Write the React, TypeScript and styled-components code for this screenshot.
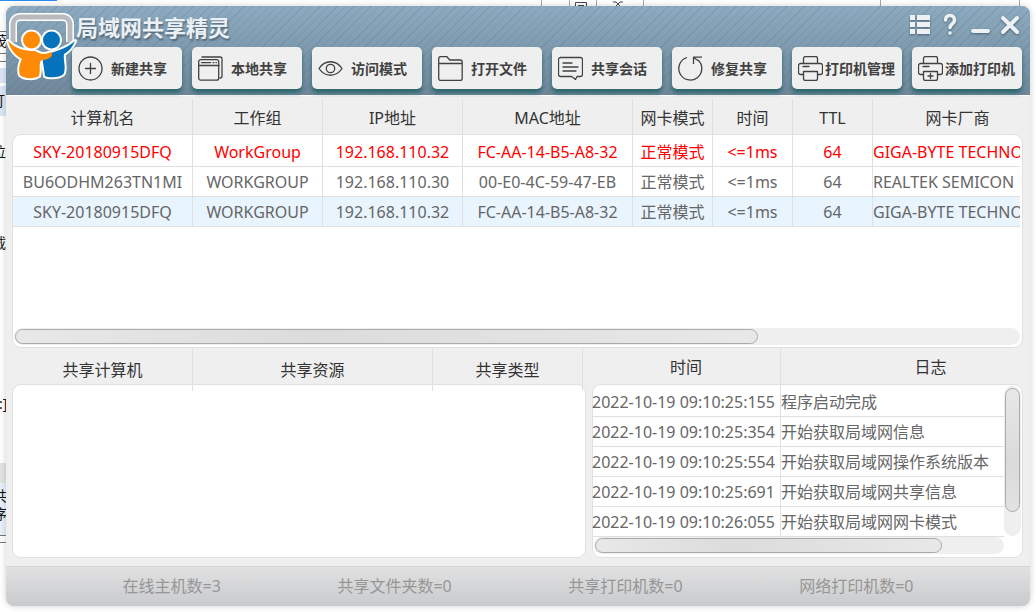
import React from 'react';
import styled, { createGlobalStyle, css } from 'styled-components';

const Global = createGlobalStyle`
  * { box-sizing: border-box; }
  body {
    margin: 0;
    background: #fff;
    font-family: 'Noto Sans', 'Noto Sans CJK SC', sans-serif;
    font-size: 16px;
    font-weight: 400;
    line-height: 24px;
    color: #333;
  }
`;

const line = '#e0e0e0';

const Desktop = styled.div`
  position: relative;
  display: flex;
  flex-direction: column;
  min-height: 100vh;
  padding: 6px;
  overflow: hidden;
`;

const Behind = styled.svg`
  position: absolute;
  top: 0;
  left: 0;
  width: 1036px;
  height: 612px;
`;

const AppWindow = styled.div`
  position: relative;
  flex: 1;
  display: flex;
  flex-direction: column;
  background: #efefef;
  border-radius: 8px;
  overflow: hidden;
  box-shadow: 0 0 6px rgba(0, 0, 0, 0.2);
`;

const Header = styled.header`
  display: grid;
  grid-template-columns: 66px 1fr;
  height: 90px;
  padding-right: 8px;
  border-bottom: 1px solid #fff;
  background:
    repeating-linear-gradient(135deg, rgba(70, 95, 115, 0.16) 0 1px, transparent 1px 6px),
    linear-gradient(#8cabc0, #70879a);
`;

const Logo = styled.svg`
  width: 66px;
  height: 80px;
  overflow: visible;
`;

const TitleRow = styled.div`
  display: flex;
  justify-content: space-between;
  height: 41px;
`;

const Title = styled.h1`
  margin: 4px 0 0 4px;
  font-family: 'Noto Sans CJK SC', sans-serif;
  font-size: 22px;
  line-height: 32px;
  font-weight: 700;
  color: #eaf0f4;
  text-shadow: 1px 2px 2px rgba(50, 65, 80, 0.6);
`;

const Controls = styled.div`
  display: flex;
  gap: 8px;
  padding: 7px 1px 0 0;
`;

const ControlButton = styled.button`
  width: 22px;
  height: 24px;
  padding: 0;
  border: 0;
  background: none;
  svg { display: block; filter: drop-shadow(0 1px 1px rgba(40, 60, 75, 0.6)); }
`;

const Toolbar = styled.nav`
  display: grid;
  grid-template-columns: repeat(8, 1fr);
  gap: 10px;
  height: 42px;
`;

const ToolButton = styled.button<{ $wide?: boolean }>`
  display: flex;
  align-items: center;
  gap: ${(p) => (p.$wide ? 2 : 8)}px;
  padding: 0 0 0 6px;
  border: 0;
  border-radius: 5px;
  background: #efefef;
  box-shadow: 0 4px 4px #2c686c;
  font-family: 'Noto Sans CJK SC', sans-serif;
  font-size: 14px;
  font-weight: 700;
  line-height: 20px;
  color: #414141;
  white-space: nowrap;
  svg { flex: none; }
`;

const Main = styled.main`
  flex: 1;
  display: flex;
  flex-direction: column;
  padding: 0 7px 8px 6px;
`;

const Pane = styled.section<{ $head: number; $grow?: boolean }>`
  position: relative;
  display: flex;
  flex-direction: column;
  min-width: 0;
  isolation: isolate;
  ${(p) => p.$grow && css`flex: 1;`}
  &::before {
    content: '';
    position: absolute;
    z-index: -1;
    inset: ${(p) => p.$head}px 0 0 0;
    background: #fff;
    border: 1px solid ${line};
    border-radius: 9px;
  }
`;

const Split = styled.div`
  display: grid;
  grid-template-columns: 574fr 431fr;
  gap: 6px;
  height: 210px;
`;

const Clip = styled.div<{ $top?: number }>`
  flex: 1;
  min-width: 0;
  overflow: hidden;
  padding-top: ${(p) => p.$top ?? 0}px;
  margin: 0 3px 0 1px;
`;

const LogClip = styled.div`
  flex: 1;
  min-width: 0;
  overflow: hidden;
`;

const Table = styled.table<{ $width: number }>`
  width: ${(p) => p.$width}px;
  table-layout: fixed;
  border-collapse: separate;
  border-spacing: 0;
`;

const Th = styled.th<{ $h: number; $low?: number }>`
  height: ${(p) => p.$h}px;
  padding: 0 0 ${(p) => p.$low ?? 0}px;
  border-right: 1px solid ${line};
  font-weight: inherit;
  text-align: center;
  color: #333;
`;

const Tr = styled.tr<{ $tone?: 'alert' | 'selected' }>`
  color: ${(p) => (p.$tone === 'alert' ? '#ff0000' : '#666')};
  ${(p) => p.$tone === 'selected' && css`background: #e8f4fe;`}
`;

const Td = styled.td<{ $left?: boolean }>`
  height: 30px;
  padding: 0;
  border-right: 1px solid ${line};
  border-bottom: 1px solid ${line};
  text-align: ${(p) => (p.$left ? 'left' : 'center')};
  white-space: nowrap;
  overflow: hidden;
`;

const HTrack = styled.div<{ $right: number; $bottom: number }>`
  height: 17px;
  margin: 0 ${(p) => p.$right}px ${(p) => p.$bottom}px 2px;
  padding: 1px;
  border-radius: 9px;
  background: #efefef;
`;

const HThumb = styled.div`
  height: 15px;
  border: 1px solid #aaa;
  border-radius: 8px;
  background: linear-gradient(90deg, #e8e8e8, #dcdcdc 40%, #e8e8e8);
`;

const VTrack = styled.div`
  width: 17px;
  height: 150px;
  margin: 38px 2px 0 0;
  padding: 2px 1px;
  border-radius: 9px;
  background: #efefef;
`;

const VThumb = styled.div`
  height: 124px;
  border: 1px solid #aaa;
  border-radius: 8px;
  background: linear-gradient(#e8e8e8, #dadada 60%, #e2e2e2);
`;

const LogRow = styled.div`
  flex: 1;
  display: flex;
  min-width: 0;
`;

const StatusBar = styled.footer`
  display: flex;
  justify-content: space-evenly;
  height: 40px;
  border-top: 1px solid #d4d4d4;
  background: linear-gradient(#e1e1e1, #c8cacd);
  color: #969696;
  line-height: 38px;
`;

const stroke = { fill: 'none', stroke: '#414141', strokeWidth: 1.3 } as const;
const Icon = ({ children }: { children: React.ReactNode }) => (
  <svg width="25" height="25" viewBox="0 0 25 25" {...stroke} strokeLinecap="round" strokeLinejoin="round" aria-hidden="true">{children}</svg>
);

const printer = (
  <>
    <path d="M5.500 7V2.500a2 2 0 0 1 2-2h10a2 2 0 0 1 2 2V7M5.500 18.500H2.500a2 2 0 0 1-2-2v-7a2 2 0 0 1 2-2h20a2 2 0 0 1 2 2v7a2 2 0 0 1-2 2h-3M5 10.500h6" />
    <path d="M5.500 15.500h14v7a2 2 0 0 1-2 2h-10a2 2 0 0 1-2-2z" />
  </>
);

const tools: { label: string; wide?: boolean; icon: React.ReactNode }[] = [
  { label: '新建共享', icon: <><circle cx="12.500" cy="12.500" r="11.500" /><path d="M7.500 12.500h10M12.500 7.500v10" /></> },
  { label: '本地共享', icon: <><rect x="0.700" y="3.700" width="20" height="20.500" rx="2" /><path d="M1 9.500h20M3.500 6.600h9M15 6.600h1M18 6.600h.5M4 1h18a2 2 0 0 1 2 2v17a2 2 0 0 1-2 2" /></> },
  { label: '访问模式', icon: <><path d="M1 12.500C7 3.500 18 3.500 24 12.500C18 21.500 7 21.500 1 12.500z" /><circle cx="12.500" cy="12.500" r="4.200" /></> },
  { label: '打开文件', icon: <><path d="M.7 22.500v-20a2 2 0 0 1 2-2h6l3 3.500h10.500a2 2 0 0 1 2 2v16.500a2 2 0 0 1-2 2H2.700a2 2 0 0 1-2-2zM1 7.500h23" /></> },
  { label: '共享会话', icon: <><path d="M2.500 1.500h20a2 2 0 0 1 2 2v15a2 2 0 0 1-2 2h-3.500l-1.500 3-4-3H2.500a2 2 0 0 1-2-2v-15a2 2 0 0 1 2-2zM5 7h9M5 11h15M5 15h13" /></> },
  { label: '修复共享', icon: <><path d="M9 1.500A11.500 11.500 0 1 0 20 4M15.500 8V1.200H24M15.500 1.500l4.500 3" strokeLinecap="butt" /></> },
  { label: '打印机管理', wide: true, icon: printer },
  { label: '添加打印机', wide: true, icon: <>{printer}<path d="M12.500 17.500v5M10 20h5" /></> },
];

const hostCols = [
  ['计算机名', 180], ['工作组', 130], ['IP地址', 140], ['MAC地址', 170],
  ['网卡模式', 80], ['时间', 80], ['TTL', 80], ['网卡厂商', 170],
] as const;

const hosts: { tone?: 'alert' | 'selected'; cells: string[] }[] = [
  { tone: 'alert', cells: ['SKY-20180915DFQ', 'WorkGroup', '192.168.110.32', 'FC-AA-14-B5-A8-32', '正常模式', '<=1ms', '64', 'GIGA-BYTE TECHNO'] },
  { cells: ['BU6ODHM263TN1MI', 'WORKGROUP', '192.168.110.30', '00-E0-4C-59-47-EB', '正常模式', '<=1ms', '64', 'REALTEK SEMICON'] },
  { tone: 'selected', cells: ['SKY-20180915DFQ', 'WORKGROUP', '192.168.110.32', 'FC-AA-14-B5-A8-32', '正常模式', '<=1ms', '64', 'GIGA-BYTE TECHNO'] },
];

const shareCols = [['共享计算机', 180], ['共享资源', 240], ['共享类型', 150]] as const;

const logs = [
  ['2022-10-19 09:10:25:155', '程序启动完成'],
  ['2022-10-19 09:10:25:354', '开始获取局域网信息'],
  ['2022-10-19 09:10:25:554', '开始获取局域网操作系统版本'],
  ['2022-10-19 09:10:25:691', '开始获取局域网共享信息'],
  ['2022-10-19 09:10:26:055', '开始获取局域网网卡模式'],
];

const blueBody = 'M69 35C66 42 62 46 58 48C57 54 60 60 58 67C56 72 42 72 39 70L36 50C48 46 60 43 69 35z';
const orangeBody = 'M2 35C10 43 18 45 29 45C33 47 37 50 45 46C48 48 45 54 36 54C32 56 35 64 33 70C29 73 18 73 14 69C12 63 14 57 16 53C9 49 4 43 2 35z';
const frame = 'M7 36V18a7 7 0 0 1 7-7h43a7 7 0 0 1 7 7V36';

const People = () => (
  <>
    <path d={frame} fill="none" stroke="#fff" strokeWidth="8" />
    <path d={frame} fill="none" stroke="#b9babd" strokeWidth="5" />
    <g stroke="#fff" strokeWidth="4" strokeLinejoin="round">
      <path d={blueBody} />
      <circle cx="45.500" cy="34" r="8.500" />
      <path d={orangeBody} />
      <circle cx="25.500" cy="34" r="8.500" />
    </g>
    <path d={blueBody} fill="#0573bb" />
    <circle cx="45.500" cy="34" r="8.500" fill="#0573bb" />
    <path d={orangeBody} fill="#ff8a05" />
    <circle cx="25.500" cy="34" r="8.500" fill="#ff8a05" />
  </>
);

export default function App() {
  return (
    <Desktop>
      <Global />
      <Behind viewBox="0 0 1036 612" aria-hidden="true">
        <path d="M0 .5h57" stroke="#2d8cf0" />
        <path d="M0 31.500h6M0 53.500h6M0 61.500h6M0 535.500h6M0 542.500h6" stroke="#777" />
        <path d="M0 68h6v15H0zM0 86h6v30H0z" fill="#dbe6f5" />
        <path d="M0 463h6v20H0z" fill="#e4e4e4" />
        <path d="M0 483h6v52H0z" fill="#e8f0fa" />
        <g fill="#111" fontSize="14">
          <text x="-7" y="46">茂</text>
          <text x="-9" y="106">打</text>
          <text x="-8" y="157">位</text>
          <text x="-8" y="248">载</text>
          <text x="-1" y="409">:]</text>
          <text x="-7" y="501">共</text>
          <text x="-7" y="519">序</text>
        </g>
        <path d="M541.500 0v6M569.500 0v6M596.500 0v6M643.500 0v6M880.500 0v6M1019.500 0v6" stroke="#aaa" />
        <path d="M575.500 6V2.500h11V6M578 5.500h6M613 2h3l2 2 2-2h3M616 6l2-2 2 2" stroke="#445" fill="none" />
      </Behind>
      <AppWindow>
        <Header>
          <Logo viewBox="0 0 66 80" aria-label="logo" role="img"><People /></Logo>
          <div>
            <TitleRow>
              <Title>局域网共享精灵</Title>
              <Controls>
                <ControlButton aria-label="菜单">
                  <svg width="22" height="24" fill="#eef1f3"><path d="M1 2h5v5H1zM8 2h13v5H8zM1 9h5v5H1zM8 9h13v5H8zM1 16h5v5H1zM8 16h13v5H8z" /></svg>
                </ControlButton>
                <ControlButton aria-label="帮助">
                  <svg width="22" height="24" fill="none" stroke="#eef1f3" strokeWidth="3.600" strokeLinecap="round"><path d="M6.500 7C6.500 1 15.500 1 15.500 7c0 4-4.500 4-4.500 7.500M11 20v.1" /></svg>
                </ControlButton>
                <ControlButton aria-label="最小化">
                  <svg width="22" height="24"><rect x="2" y="16" width="19" height="4" rx="2" fill="#eef1f3" /></svg>
                </ControlButton>
                <ControlButton aria-label="关闭">
                  <svg width="22" height="24" stroke="#eef1f3" strokeWidth="4" strokeLinecap="round"><path d="M4 5l14 14M18 5L4 19" /></svg>
                </ControlButton>
              </Controls>
            </TitleRow>
            <Toolbar>
              {tools.map((t) => (
                <ToolButton key={t.label} $wide={t.wide}><Icon>{t.icon}</Icon>{t.label}</ToolButton>
              ))}
            </Toolbar>
          </div>
        </Header>
        <Main>
          <Pane $head={38} $grow>
            <Clip $top={3}>
              <Table $width={1030}>
                <colgroup>{hostCols.map(([n, w]) => <col key={n} width={w} />)}</colgroup>
                <thead><tr>{hostCols.map(([n]) => <Th key={n} $h={38}>{n}</Th>)}</tr></thead>
                <tbody>
                  {hosts.map((h, r) => (
                    <Tr key={r} $tone={h.tone}>{h.cells.map((c, i) => <Td key={i} $left={i === 7}>{c}</Td>)}</Tr>
                  ))}
                </tbody>
              </Table>
            </Clip>
            <HTrack $right={3} $bottom={3}><HThumb style={{ width: '74%' }} /></HTrack>
          </Pane>
          <Split>
            <Pane $head={36}>
              <Clip>
                <Table $width={570}>
                  <colgroup>{shareCols.map(([n, w]) => <col key={n} width={w} />)}</colgroup>
                  <thead><tr>{shareCols.map(([n]) => <Th key={n} $h={43}>{n}</Th>)}</tr></thead>
                </Table>
              </Clip>
            </Pane>
            <Pane $head={36}>
              <LogRow>
                <LogClip>
                  <Table $width={489}>
                    <colgroup><col width={189} /><col width={300} /></colgroup>
                    <thead><tr><Th $h={39} $low={2}>时间</Th><Th $h={39} $low={2}>日志</Th></tr></thead>
                    <tbody>
                      {logs.map(([t, m]) => <Tr key={t}><Td $left>{t}</Td><Td $left>{m}</Td></Tr>)}
                    </tbody>
                  </Table>
                </LogClip>
                <VTrack><VThumb /></VTrack>
              </LogRow>
              <HTrack $right={19} $bottom={4}><HThumb style={{ width: '85%' }} /></HTrack>
            </Pane>
          </Split>
        </Main>
        <StatusBar>
          <span>在线主机数=3</span>
          <span>共享文件夹数=0</span>
          <span>共享打印机数=0</span>
          <span>网络打印机数=0</span>
        </StatusBar>
      </AppWindow>
    </Desktop>
  );
}
